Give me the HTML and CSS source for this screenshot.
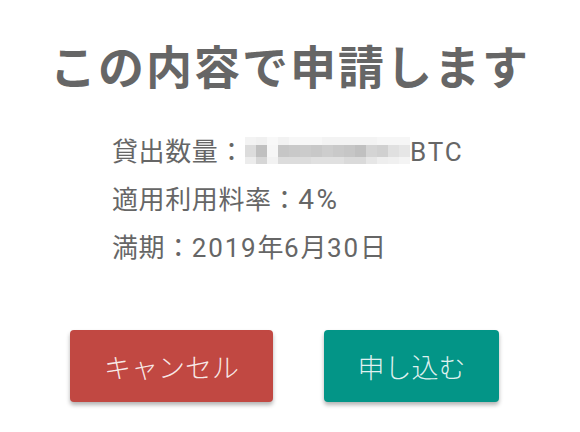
FILE: index.html
```html
<!DOCTYPE html>
<html lang="ja">
<head>
    <meta charset="UTF-8">
    <meta name="viewport" content="width=device-width, initial-scale=1.0">
    <title>申請確認</title>
    <link rel="stylesheet" href="styles.css">
</head>
<body>
    <div class="confirm">
        <h1 class="confirm-title">この内容で申請します</h1>

        <div class="details">
            <p class="detail-line">貸出数量：<span class="masked"></span><span class="val">BTC</span></p>
            <p class="detail-line">適用利用料率：<span class="val rate">4%</span></p>
            <p class="detail-line">満期：<span class="val">2019</span>年<span class="val">6</span>月<span class="val">30</span>日</p>
        </div>

        <div class="actions">
            <button class="btn btn-cancel">キャンセル</button>
            <button class="btn btn-apply">申し込む</button>
        </div>
    </div>
</body>
</html>
```

FILE: styles.css
```css
* {
    margin: 0;
    padding: 0;
    box-sizing: border-box;
}
body {
    background: #fff;
    font-family: Roboto, "Noto Sans CJK JP", sans-serif;
    color: #666;
}
.confirm {
    width: 580px;
    height: 432px;
    padding-top: 45px;
}
.confirm-title {
    font-size: 46px;
    line-height: 46px;
    font-weight: 700;
    text-align: center;
    letter-spacing: 2px;
    color: #666;
}
.details {
    margin-top: 37px;
    padding-left: 112px;
}
.detail-line {
    font-size: 26px;
    line-height: 48px;
    letter-spacing: 0.6px;
    white-space: nowrap;
}
.val {
    letter-spacing: 1.8px;
}
.rate {
    font-size: 28px;
    letter-spacing: 2.5px;
}
.masked {
    display: inline-block;
    width: 165px;
    height: 27px;
    vertical-align: -3px;
    background-image:
        linear-gradient(to right, #f3f3f3 0 11px, #f0f0f0 11px 22px, #f8f8f8 22px 33px, #f2f2f2 33px 44px, #f7f7f7 44px 77px, #f3f3f3 77px 132px, #f6f6f6 132px 165px),
        linear-gradient(to right, #dcdcdc 0 11px, #c0c0c0 11px 22px, #f6f6f6 22px 33px, #c6c6c6 33px 44px, #c9c9c9 44px 55px, #cbcbcb 55px 66px, #c8c8c8 66px 77px, #cdcdcd 77px 88px, #c9c9c9 88px 99px, #c6c6c6 99px 110px, #c0c0c0 110px 121px, #d4d4d4 121px 132px, #d0d0d0 132px 143px, #e0e0e0 143px 154px, #e6e6e6 154px 165px),
        linear-gradient(to right, #ececec 0 11px, #d6d6d6 11px 22px, #f2f2f2 22px 33px, #dcdcdc 33px 66px, #e0e0e0 66px 99px, #dadada 99px 121px, #e6e6e6 121px 132px, #eeeeee 132px 143px, #f0f0f0 143px 154px, #f4f4f4 154px 165px);
    background-size: 165px 8px, 165px 12px, 165px 7px;
    background-position: 0 0, 0 8px, 0 20px;
    background-repeat: no-repeat;
}
.actions {
    display: flex;
    gap: 51px;
    margin-top: 58px;
    padding-left: 70px;
}
.btn {
    height: 72px;
    border: none;
    border-radius: 4px;
    font-family: Roboto, "Noto Sans CJK JP", sans-serif;
    font-size: 27px;
    font-weight: 300;
    color: rgba(255, 255, 255, 0.88);
    box-shadow: 0 3px 4px rgba(0, 0, 0, 0.3);
    cursor: pointer;
}
.btn-cancel {
    width: 203px;
    background: #c14842;
}
.btn-apply {
    width: 175px;
    background: #039587;
}
```
